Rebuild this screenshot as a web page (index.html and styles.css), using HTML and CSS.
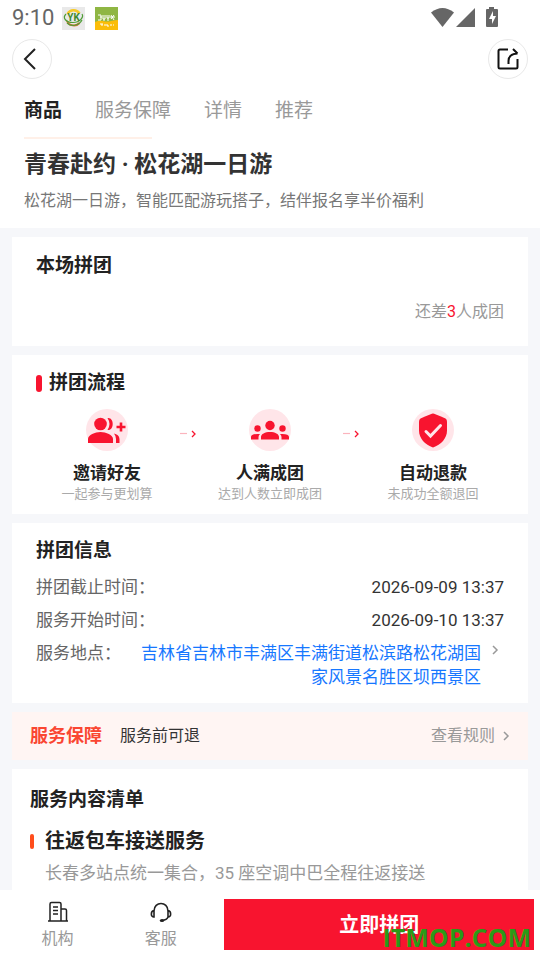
FILE: index.html
```html
<!DOCTYPE html>
<html lang="zh-CN">
<head>
<meta charset="utf-8">
<meta name="viewport" content="width=device-width, initial-scale=1">
<title>青春赴约 · 松花湖一日游</title>
<link rel="stylesheet" href="styles.css">
</head>
<body>
<div class="status">
  <span class="clock">9:10</span>
  <svg class="app-icon" viewBox="0 0 23 23" aria-hidden="true">
    <rect width="23" height="23" fill="#e9e9e9"/>
    <path d="M5.500 7a7 7 0 0 1 12-0.500" fill="none" stroke="#f6c928" stroke-width="2.500"/>
    <path d="M5 14c2 5 9 6 12.500 2" fill="none" stroke="#ee6a35" stroke-width="2"/>
    <path d="M4 7C0 11 4 15.500 11 15.500S22 10 20 7M5 16c4 4 12 3 15-3" fill="none" stroke="#4f9d35" stroke-width="1.200"/>
    <text x="11.500" y="14" text-anchor="middle" class="logo-yk">YK</text>
  </svg>
  <svg class="app-icon app-green" viewBox="0 0 23 23" aria-hidden="true">
    <rect width="23" height="23" fill="#8fb643"/>
    <path d="M0 15q4-2 8-1t8 0 7-1v10H0z" fill="#fbbd09"/>
    <path d="M3 8h3v5H3M5 10h2M8 8v4h2V8M9 12v2M12 8v3h2V8M13 11v3M16 8l3 5M19 8l-3 4M15 10h5" fill="none" stroke="#fff" stroke-width="1"/>
    <path d="M5 17h3M7 17v2M9 18h2M12 17v2h2M16 17v2M18 18h1" fill="none" stroke="#fff" stroke-width="1"/>
  </svg>
  <svg class="signals" viewBox="0 0 68 22" aria-hidden="true">
    <g fill="#666">
      <path d="M0 5.500Q11.500-3.500 23 5.500L11.500 20z"/>
      <path d="M44 1v19H25z"/>
      <path d="M58 0h5v2h3q1 0 1 1v16q0 1-1 1H56q-1 0-1-1V3q0-1 1-1h2z"/>
    </g>
    <path d="M62 4l-4 8h3v5l4-8h-3z" fill="#fff"/>
  </svg>
</div>
<header class="nav">
  <button class="round" type="button" aria-label="返回">
    <svg viewBox="0 0 24 24" class="icon24"><path d="M15 2L5 12l10 10" fill="none" stroke="#222" stroke-width="2"/></svg>
  </button>
  <button class="round" type="button" aria-label="分享">
    <svg viewBox="0 0 24 24" class="icon24"><path d="M12 2.500H4Q2.500 2.500 2.500 4v16q0 1.500 1.500 1.500h16q1.500 0 1.500-1.500v-8" fill="none" stroke="#111" stroke-width="2"/><path d="M12.500 17v-3q0-7 9-7.500M17 2l4.500 4.500" fill="none" stroke="#111" stroke-width="2"/></svg>
  </button>
</header>
<nav class="tabs">
  <a href="#goods" class="active">商品</a>
  <a href="#guarantee">服务保障</a>
  <a href="#detail">详情</a>
  <a href="#more">推荐</a>
</nav>
<main>
  <section class="intro" id="goods">
    <h1>青春赴约 · 松花湖一日游</h1>
    <p>松花湖一日游，智能匹配游玩搭子，结伴报名享半价福利</p>
  </section>

  <section class="card group">
    <h2>本场拼团</h2>
    <p>还差<span>3</span>人成团</p>
  </section>

  <section class="card flow">
    <h2 class="marked">拼团流程</h2>
    <div class="steps">
      <div class="step">
        <svg class="badge" viewBox="0 0 42 42" aria-hidden="true">
          <circle cx="21" cy="21" r="21" fill="#ffe5e9"/>
          <g fill="#f8142f"><circle cx="14.500" cy="15" r="6.300"/><path d="M2 34v-4c0-4 7-7 12.500-7S27 26 27 30v4z"/><path d="M21.500 9c7-1 7 13 0 12q4-6 0-12zM28 24.500c4 1 5.500 3 5.500 6V34H30v-4q0-3-2-5.500z"/></g>
          <path d="M35 13.500v9M30.500 18h9" stroke="#f8142f" stroke-width="2.600"/>
        </svg>
        <h3>邀请好友</h3><p>一起参与更划算</p>
      </div>
      <svg class="arrow" viewBox="0 0 18 8" aria-hidden="true"><path d="M0 3.500h7" stroke="#fbb4bd" stroke-width="1.200"/><path d="M12 1l3 3-3 3" fill="none" stroke="#f8142f" stroke-width="1.300"/></svg>
      <div class="step">
        <svg class="badge" viewBox="0 0 42 42" aria-hidden="true">
          <circle cx="21" cy="21" r="21" fill="#ffe5e9"/>
          <g fill="#f8142f"><circle cx="21" cy="16.500" r="4.700"/><circle cx="8.500" cy="19.500" r="3.200"/><circle cx="33.500" cy="19.500" r="3.200"/><path d="M12 30.500V28c0-3 4-5 9-5s9 2 9 5v2.500zM2 30.500V28q0-3.500 9-3-1.500 1.500-1.500 3v2.500zM40 30.500V28q0-3.500-9-3 1.500 1.500 1.500 3v2.500z"/></g>
        </svg>
        <h3>人满成团</h3><p>达到人数立即成团</p>
      </div>
      <svg class="arrow" viewBox="0 0 18 8" aria-hidden="true"><path d="M0 3.500h7" stroke="#fbb4bd" stroke-width="1.200"/><path d="M12 1l3 3-3 3" fill="none" stroke="#f8142f" stroke-width="1.300"/></svg>
      <div class="step">
        <svg class="badge" viewBox="0 0 42 42" aria-hidden="true">
          <circle cx="21" cy="21" r="21" fill="#ffe5e9"/>
          <path d="M21 4.500q1 0 12.500 5 1.500 1 1.500 3v9c0 8-6 14-14 17C13 35.500 7 29.500 7 21.500v-9q0-2 1.500-3Q20 4.500 21 4.500z" fill="#f8142f"/>
          <path d="M14 22.500l4.500 4.500 10-10.500" fill="none" stroke="#ffe5e9" stroke-width="3" stroke-linecap="round"/>
        </svg>
        <h3>自动退款</h3><p>未成功全额退回</p>
      </div>
    </div>
  </section>

  <section class="card info">
    <h2>拼团信息</h2>
    <dl>
      <div><dt>拼团截止时间：</dt><dd>2026-09-09 13:37</dd></div>
      <div><dt>服务开始时间：</dt><dd>2026-09-10 13:37</dd></div>
      <div><dt>服务地点：</dt><dd><a href="#map"><span>吉林省吉林市丰满区丰满街道松滨路松花湖国家风景名胜区坝西景区</span><svg class="chev" viewBox="0 0 8 12" aria-hidden="true"><path d="M2 2l4 4-4 4" fill="none" stroke="#999" stroke-width="1.500"/></svg></a></dd></div>
    </dl>
  </section>

  <section class="card guarantee" id="guarantee">
    <h2>服务保障</h2>
    <p>服务前可退</p>
    <a href="#rules">查看规则<svg class="chev" viewBox="0 0 8 12" aria-hidden="true"><path d="M2 2l4 4-4 4" fill="none" stroke="#999" stroke-width="1.500"/></svg></a>
  </section>

  <section class="card list" id="detail">
    <h2>服务内容清单</h2>
    <h3>往返包车接送服务</h3>
    <p>长春多站点统一集合，35 座空调中巴全程往返接送</p>
  </section>
</main>
<footer>
  <a href="#org" class="tool">
    <svg viewBox="0 0 22 22" class="icon22" aria-hidden="true"><path d="M1 20h20M3 20V3q0-1.500 1.500-1.500h8Q14 1.500 14 3v17M14 8h4q1.500 0 1.500 1.500V20M6 6h5M6 9.500h5M6 13h5" fill="none" stroke="#222" stroke-width="1.500"/></svg>
    机构
  </a>
  <a href="#service" class="tool">
    <svg viewBox="0 0 22 22" class="icon22" aria-hidden="true"><path d="M4 10C4 0 18 0 18 10M4 9.500c-4 1-3 7 0 6.500zM18 9.500c4 1 3 7 0 6.500zM18 16q-1 3-6 3.500" fill="none" stroke="#222" stroke-width="1.600"/><ellipse cx="12" cy="19.500" rx="2.200" ry="1.500" fill="#222"/></svg>
    客服
  </a>
  <button type="button" class="buy">立即拼团</button>
  <span class="mark">ITMOP.COM</span>
</footer>
</body>
</html>
```

FILE: styles.css
```css
* { box-sizing: border-box; }
body {
  margin: 0;
  height: 100vh;
  display: flex;
  flex-direction: column;
  overflow: hidden;
  background: #fff;
  color: #222;
  font-family: Roboto, "Noto Sans CJK SC", sans-serif;
  font-size: 17px;
  line-height: 24px;
}
h1, h2, h3, p, dl, dd { margin: 0; font-weight: 400; }
a { color: inherit; text-decoration: none; }
button { font: inherit; border: 0; padding: 0; }
svg { display: block; flex: none; }

.status { display: flex; align-items: center; height: 36px; padding: 0 41px 0 12px; }
.clock { color: #666; font-size: 22px; margin-right: 8px; }
.app-icon { width: 23px; height: 23px; }
.app-green { margin-left: 10px; }
.logo-yk { font: 700 10px Roboto, sans-serif; fill: #438a2c; }
.signals { width: 68px; height: 22px; margin-left: auto; }

.nav { display: flex; justify-content: space-between; padding: 3px 12px; }
.round {
  width: 40px; height: 40px;
  display: grid; place-items: center;
  border: 1px solid #e8e8e8; border-radius: 50%;
  background: #fff;
}
.icon24 { width: 24px; height: 24px; }

.tabs { display: flex; gap: 33px; padding: 17px 24px 14px; color: #999; font-size: 19px; }
.tabs .active { color: #222; font-weight: 700; }

.intro { background: #fff; padding: 0 24px 15px; }
.intro::before { content: ""; display: block; width: 128px; height: 2px; background: #fff0e8; }
.intro h1 { font-size: 23px; line-height: 32px; font-weight: 700; color: #333; padding-top: 10px; }
.intro p { font-size: 16px; color: #777; margin-top: 8px; }

main {
  flex: 1; min-height: 0; overflow: hidden;
  display: flex; flex-direction: column; gap: 9px;
  background: #f6f7fa;
}
.card { flex: none; margin: 0 12px; padding: 16px 24px; background: #fff; }
.card h2 { font-size: 19px; font-weight: 700; }

.group { padding-top: 17px; }
.group p { font-size: 16px; color: #999; text-align: right; margin: 22px 0 6px; }
.group span { color: #f8142f; }

.flow { padding-bottom: 11px; }
.marked { display: flex; align-items: center; gap: 7px; }
.marked::before { content: ""; width: 6px; height: 17px; border-radius: 3px; background: #f8142f; }
.steps { display: flex; justify-content: space-between; padding-top: 14px; }
.step { width: 142px; display: flex; flex-direction: column; align-items: center; }
.badge { width: 42px; height: 42px; }
.step h3 { font-size: 17px; font-weight: 700; margin-top: 10px; }
.step p { font-size: 13px; line-height: 18px; color: #aaa; }
.arrow { width: 18px; height: 8px; margin-top: 21px; }

.info { padding-bottom: 14px; }
.info dl { display: flex; flex-direction: column; gap: 9px; margin-top: 12px; }
.info dl div { display: flex; justify-content: space-between; }
.info dt { flex: none; color: #666; }
.info dd { color: #333; text-align: right; }
.info dd a { display: flex; justify-content: flex-end; gap: 10px; color: #1677ff; padding-right: 5px; }
.info dd a span { max-width: 348px; }
.chev { width: 8px; height: 12px; margin-top: 3px; }

.guarantee { display: flex; align-items: center; padding: 12px 18px; background: #fff5f3; }
.guarantee h2 { font-size: 18px; color: #fa4632; }
.guarantee p { font-size: 16px; color: #333; margin-left: 18px; }
.guarantee a { display: flex; align-items: center; gap: 7px; margin-left: auto; font-size: 16px; color: #999; }
.guarantee .chev { margin-top: 0; }

.list { padding: 19px 18px; }
.list h3 { display: flex; align-items: center; gap: 11px; font-size: 20px; font-weight: 700; margin-top: 17px; }
.list h3::before { content: ""; width: 4px; height: 15px; border-radius: 2px; background: #ff4d1c; }
.list p { color: #999; margin: 8px 0 0 15px; }

footer { position: relative; flex: none; display: flex; padding: 9px 6px; background: #fff; }
.tool { flex: 1; display: flex; flex-direction: column; align-items: center; gap: 4px; font-size: 16px; color: #999; }
.icon22 { width: 22px; height: 22px; margin-top: 2px; }
.buy { flex: 3; height: 51px; margin-left: 12px; background: #f8142f; color: #fff; font-size: 20px; font-weight: 700; }
.mark {
  position: absolute; right: 9px; bottom: 11px;
  font: 700 25px/24px "Open Sans", sans-serif;
  color: #2b9a17;
}
```
